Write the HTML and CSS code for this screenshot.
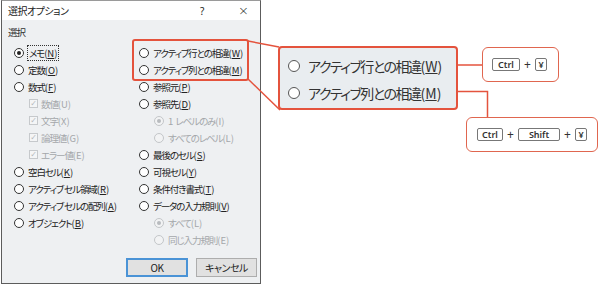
FILE: index.html
```html
<!DOCTYPE html>
<html lang="ja">
  <head>
    <meta charset="utf-8">
    <title>選択オプション</title>
    <link rel="stylesheet" href="styles.css">
  </head>
  <body>
    <div class="page">
      <div class="dialog">
        <div class="titlebar">
          <span class="title">選択オプション</span>
          <span class="help">?</span>
          <span class="close">×</span>
        </div>
        <div class="group-label">選択</div>
        <div class="options">
          <div class="col">
            <div class="row"><span class="radio on"></span><span class="focus">メモ<span class="k">(<u>N</u>)</span></span></div>
            <div class="row"><span class="radio"></span>定数<span class="k">(<u>O</u>)</span></div>
            <div class="row"><span class="radio"></span>数式<span class="k">(<u>F</u>)</span></div>
            <div class="row sub off"><span class="check">✓</span>数値<span class="k">(U)</span></div>
            <div class="row sub off"><span class="check">✓</span>文字<span class="k">(X)</span></div>
            <div class="row sub off"><span class="check">✓</span>論理値<span class="k">(G)</span></div>
            <div class="row sub off"><span class="check">✓</span>エラー値<span class="k">(E)</span></div>
            <div class="row"><span class="radio"></span>空白セル<span class="k">(<u>K</u>)</span></div>
            <div class="row"><span class="radio"></span>アクティブ&nbsp;セル領域<span class="k">(<u>R</u>)</span></div>
            <div class="row"><span class="radio"></span>アクティブ&nbsp;セルの配列<span class="k">(<u>A</u>)</span></div>
            <div class="row"><span class="radio"></span>オブジェクト<span class="k">(<u>B</u>)</span></div>
          </div>
          <div class="col">
            <div class="highlight">
              <div class="row"><span class="radio"></span>アクティブ行との相違<span class="k">(<u>W</u>)</span></div>
              <div class="row"><span class="radio"></span>アクティブ列との相違<span class="k">(<u>M</u>)</span></div>
            </div>
            <div class="row"><span class="radio"></span>参照元<span class="k">(<u>P</u>)</span></div>
            <div class="row"><span class="radio"></span>参照先<span class="k">(<u>D</u>)</span></div>
            <div class="row sub off"><span class="radio on"></span><span class="k">1&nbsp;</span>レベルのみ<span class="k">(I)</span></div>
            <div class="row sub off"><span class="radio"></span>すべてのレベル<span class="k">(L)</span></div>
            <div class="row"><span class="radio"></span>最後のセル<span class="k">(<u>S</u>)</span></div>
            <div class="row"><span class="radio"></span>可視セル<span class="k">(<u>Y</u>)</span></div>
            <div class="row"><span class="radio"></span>条件付き書式<span class="k">(<u>T</u>)</span></div>
            <div class="row"><span class="radio"></span>データの入力規則<span class="k">(<u>V</u>)</span></div>
            <div class="row sub off"><span class="radio on"></span>すべて<span class="k">(L)</span></div>
            <div class="row sub off"><span class="radio"></span>同じ入力規則<span class="k">(E)</span></div>
          </div>
        </div>
        <div class="buttons">
          <button class="btn default">OK</button>
          <button class="btn">キャンセル</button>
        </div>
      </div>

      <svg class="wires" width="600" height="287" viewBox="0 0 600 287">
        <g stroke="#e4533d" stroke-width="1.5" fill="none">
          <line x1="248" y1="41" x2="279" y2="47"/>
          <line x1="248" y1="79" x2="280" y2="110"/>
          <line x1="454" y1="65" x2="482" y2="65"/>
          <polyline points="451,91.5 487.5,91.5 487.5,117"/>
        </g>
        <g fill="#e4533d">
          <polygon points="444,65 456,60.5 456,69.5"/>
          <polygon points="440,91.5 452,87 452,96"/>
        </g>
      </svg>

      <div class="callout">
        <div class="big-row"><span class="radio big"></span>アクティブ行との相違<span class="k">(<u>W</u>)</span></div>
        <div class="big-row"><span class="radio big"></span>アクティブ列との相違<span class="k">(<u>M</u>)</span></div>
      </div>

      <div class="keys keys-one">
        <span class="key ctrl">Ctrl</span><span class="plus">+</span><span class="key yen">¥</span>
      </div>
      <div class="keys keys-two">
        <span class="key ctrl2">Ctrl</span><span class="plus">+</span><span class="key shift">Shift</span><span class="plus">+</span><span class="key yen">¥</span>
      </div>
    </div>
  </body>
</html>
```

FILE: styles.css
```css
*{
    margin: 0;
    padding: 0;
    box-sizing: border-box;
}
body{
    background: #fff;
    font-family: "Noto Sans CJK JP", "Noto Sans", sans-serif;
    color: #222;
}
.page{
    position: relative;
    width: 600px;
    height: 287px;
    overflow: hidden;
}
.dialog{
    width: 260px;
    height: 284px;
    margin-left: 1px;
    border: 1px solid #5c5c5c;
    border-top-color: #9a9a9a;
    background: #eef0f2;
    display: flex;
    flex-direction: column;
    font-size: 9.5px;
    letter-spacing: -1.1px;
    font-feature-settings: "palt";
}
.k{
    letter-spacing: 0;
}
.titlebar{
    height: 19px;
    background: #fff;
    display: flex;
    align-items: center;
    padding-left: 6px;
    font-size: 10px;
    letter-spacing: -0.5px;
}
.title{
    flex: 1;
}
.help{
    width: 12px;
    margin-right: 26px;
    font-family: "Noto Sans", sans-serif;
    font-size: 10px;
}
.close{
    width: 12px;
    margin-right: 10px;
    font-family: "DejaVu Sans", sans-serif;
    font-size: 13px;
    font-weight: 300;
}
.group-label{
    height: 24px;
    padding: 5px 0 0 6px;
    color: #333;
}
.options{
    display: grid;
    grid-template-columns: 125px 1fr;
    padding-left: 12px;
}
.row{
    height: 17px;
    display: flex;
    align-items: center;
    white-space: nowrap;
}
.row.sub{
    padding-left: 15px;
}
.row.off{
    color: #a4a7aa;
}
.radio{
    width: 10px;
    height: 10px;
    border: 1px solid #333;
    border-radius: 50%;
    background: #fff;
    margin-right: 4px;
    flex: none;
    position: relative;
}
.radio.on::after{
    content: "";
    position: absolute;
    left: 2px;
    top: 2px;
    width: 4px;
    height: 4px;
    border-radius: 50%;
    background: #222;
}
.off .radio{
    border-color: #c3c6c9;
    background: #f2f3f4;
}
.off .radio.on::after{
    background: #b8bbbe;
}
.check{
    width: 9px;
    height: 9px;
    border: 1px solid #c6c9cc;
    background: #f4f5f6;
    margin-right: 3px;
    font-size: 8px;
    line-height: 7px;
    letter-spacing: 0;
    text-align: center;
    color: #b5b8bb;
    font-family: "DejaVu Sans", sans-serif;
}
.focus{
    outline: 1px dotted #333;
    outline-offset: 0;
    padding: 0 1px;
}
u{
    text-decoration-thickness: 1px;
    text-underline-offset: 1px;
}
.highlight{
    margin: -5px 11px -3px -7px;
    border: 2px solid #e4533d;
    border-radius: 3px;
    padding: 3px 0 1px 5px;
}
.buttons{
    margin-top: auto;
    margin-bottom: 6px;
    padding-right: 3px;
    display: flex;
    justify-content: flex-end;
    gap: 8px;
}
.btn{
    width: 61px;
    height: 19px;
    border: 1px solid #adadad;
    background: #e1e1e1;
    font-family: "Noto Sans CJK JP", sans-serif;
    font-feature-settings: "palt";
    font-size: 10px;
    letter-spacing: -0.5px;
    color: #222;
}
.btn.default{
    width: 62px;
    border: 2px solid #4a93d6;
}
.wires{
    position: absolute;
    left: 0;
    top: 0;
}
.callout{
    position: absolute;
    left: 278px;
    top: 46px;
    width: 180px;
    height: 64px;
    border: 2px solid #e4533d;
    border-radius: 4px;
    background: #e9edf0;
    padding: 4px 0 0 8px;
    font-size: 14px;
    letter-spacing: -1.5px;
    font-feature-settings: "palt";
    color: #333;
}
.big-row{
    height: 27px;
    display: flex;
    align-items: center;
    white-space: nowrap;
}
.radio.big{
    width: 12px;
    height: 12px;
    border: 1.5px solid #555;
    margin-right: 8px;
}
.keys{
    position: absolute;
    height: 35px;
    border: 1.5px solid #e0664f;
    border-radius: 6px;
    background: #fff;
    display: flex;
    align-items: center;
    font-family: "Noto Sans", sans-serif;
    color: #333;
}
.keys-one{
    left: 482px;
    top: 47px;
    width: 77px;
    padding-left: 9px;
}
.keys-two{
    left: 466px;
    top: 117px;
    width: 132px;
    padding-left: 10px;
}
.key{
    height: 13px;
    border: 1px solid #777;
    border-radius: 2px;
    font-size: 9px;
    font-weight: 600;
    line-height: 11px;
    text-align: center;
}
.ctrl{
    width: 28px;
}
.ctrl2{
    width: 26px;
}
.shift{
    width: 42px;
}
.yen{
    width: 12px;
}
.plus{
    width: 15px;
    text-align: center;
    font-size: 12px;
    line-height: 12px;
}
```
